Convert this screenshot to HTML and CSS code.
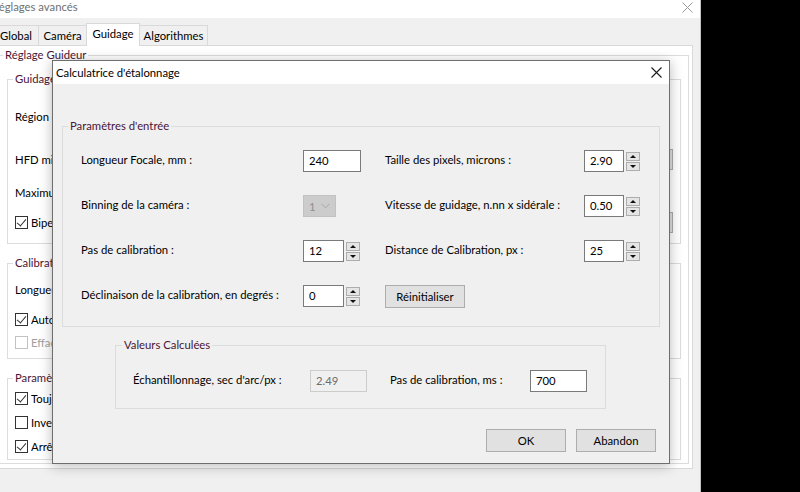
FILE: index.html
```html
<!DOCTYPE html>
<html lang="fr">
<head>
<meta charset="utf-8">
<title>Calculatrice d'étalonnage</title>
<link rel="stylesheet" href="styles.css">
</head>
<body>
<div class="screen">
  <div class="bgwin">
    <div class="bg-title">
      <span class="bg-title-text">Réglages avancés</span>
      <svg class="bg-close" width="11" height="11" viewBox="0 0 11 11"><path d="M0.5 0.5L10.5 10.5M10.5 0.5L0.5 10.5" stroke="#9a9a9a" stroke-width="1" fill="none"/></svg>
    </div>
    <div class="tabs">
      <div class="tab t-global">Global</div>
      <div class="tab t-camera">Caméra</div>
      <div class="tab t-guid sel">Guidage</div>
      <div class="tab t-algo">Algorithmes</div>
    </div>
    <div class="panel">
      <fieldset class="grp outer">
        <legend>Réglage Guideur</legend>
        <fieldset class="grp g-guid">
          <legend><span class="clip clip-l">Guidage</span></legend>
          <div class="brow m18"><span class="clip clip-l">Région de recherche (pixels) :</span></div>
          <div class="brow m21"><span class="clip clip-l">HFD minimum (pixels) :</span><span class="bbtn"></span></div>
          <div class="brow m11"><span class="clip clip-l">Maximum de pixels de l'étoile :</span></div>
          <div class="brow m8"><span class="cb on"></span><span class="clip clip-c">Bipeur lors de la perte d'étoile</span><span class="bbtn"></span></div>
        </fieldset>
        <fieldset class="grp g-cal">
          <legend><span class="clip clip-l">Calibration</span></legend>
          <div class="brow m7"><span class="clip clip-l">Longueur focale du guideur (mm) :</span></div>
          <div class="brow m8"><span class="cb on"></span><span class="clip clip-c">Autoriser la calibration automatique</span></div>
          <div class="brow m1 dis"><span class="cb off dis"></span><span class="clip clip-c">Effacer la calibration</span></div>
        </fieldset>
        <fieldset class="grp g-par">
          <legend><span class="clip clip-l">Paramètres</span></legend>
          <div class="brow h24"><span class="cb on"></span><span class="clip clip-c">Toujours recalibrer</span></div>
          <div class="brow h24"><span class="cb off"></span><span class="clip clip-c">Inverser la déclinaison</span></div>
          <div class="brow h24"><span class="cb on"></span><span class="clip clip-c">Arrêter le guidage</span></div>
        </fieldset>
      </fieldset>
    </div>
  </div>

  <div class="dialog">
    <div class="dlg-title">
      <span>Calculatrice d'étalonnage</span>
      <svg class="dlg-close" width="11" height="11" viewBox="0 0 11 11"><path d="M0.5 0.5L10.5 10.5M10.5 0.5L0.5 10.5" stroke="#1a1a1a" stroke-width="1.1" fill="none"/></svg>
    </div>
    <div class="dlg-body">
      <fieldset class="dgrp g-in">
        <legend>Paramètres d'entrée</legend>
        <div class="in-grid">
          <div class="lbl">Longueur Focale, mm :</div>
          <div class="fld"><span class="inp w58">240</span></div>
          <div class="lbl">Taille des pixels, microns :</div>
          <div class="fld"><span class="inp w40">2.90</span><span class="spin"><span class="sb"><i class="up"></i></span><span class="sb"><i class="dn"></i></span></span></div>

          <div class="lbl">Binning de la caméra :</div>
          <div class="fld"><span class="combo"><span>1</span><svg width="9" height="6" viewBox="0 0 9 6"><path d="M0.5 0.8L4.5 4.8L8.5 0.8" stroke="#a8a8a8" stroke-width="1" fill="none"/></svg></span></div>
          <div class="lbl">Vitesse de guidage, n.nn x sidérale :</div>
          <div class="fld"><span class="inp w40">0.50</span><span class="spin"><span class="sb"><i class="up"></i></span><span class="sb"><i class="dn"></i></span></span></div>

          <div class="lbl">Pas de calibration :</div>
          <div class="fld"><span class="inp w41">12</span><span class="spin"><span class="sb"><i class="up"></i></span><span class="sb"><i class="dn"></i></span></span></div>
          <div class="lbl">Distance de Calibration, px :</div>
          <div class="fld"><span class="inp w40">25</span><span class="spin"><span class="sb"><i class="up"></i></span><span class="sb"><i class="dn"></i></span></span></div>

          <div class="lbl">Déclinaison de la calibration, en degrés :</div>
          <div class="fld"><span class="inp w41">0</span><span class="spin"><span class="sb"><i class="up"></i></span><span class="sb"><i class="dn"></i></span></span></div>
          <div class="fld"><span class="btn">Réinitialiser</span></div>
          <div></div>
        </div>
      </fieldset>

      <fieldset class="dgrp g-out">
        <legend>Valeurs Calculées</legend>
        <div class="out-grid">
          <div class="lbl">Échantillonnage, sec d'arc/px :</div>
          <div class="fld"><span class="inp w57 disabled">2.49</span></div>
          <div class="lbl">Pas de calibration, ms :</div>
          <div class="fld"><span class="inp w57">700</span></div>
        </div>
      </fieldset>

      <div class="actions">
        <span class="btn">OK</span>
        <span class="btn">Abandon</span>
      </div>
    </div>
  </div>
</div>
</body>
</html>
```

FILE: styles.css
```css
* { box-sizing: border-box; }

html, body {
  margin: 0;
  padding: 0;
  width: 800px;
  height: 492px;
  overflow: hidden;
  background: #000;
}

body {
  font-family: Lato, "Noto Sans", sans-serif;
  font-size: 11.3px;
  color: #000;
}

.screen {
  position: relative;
  width: 800px;
  height: 492px;
  overflow: hidden;
  background: #000;
}

/* ---------- background window ---------- */
.bgwin {
  width: 701px;
  height: 492px;
  background: #f0f0f0;
  border-right: 1px solid #c4c4c4;
  overflow: hidden;
}

.bg-title {
  height: 18px;
  background: #fff;
  display: flex;
  align-items: center;
  justify-content: space-between;
  padding-right: 7px;
}

.bg-title-text {
  margin-left: -8px;
  color: #6f6f6f;
  line-height: 16px;
  position: relative;
  top: -2px;
}

.bg-close { position: relative; top: -2px; }

.tabs {
  height: 27px;
  display: flex;
  align-items: flex-end;
  margin-left: -7px;
}

.tab {
  height: 20px;
  line-height: 19px;
  text-align: center;
  background: #f0f0f0;
  border: 1px solid #d9d9d9;
  border-bottom: none;
  margin-right: -1px;
  white-space: nowrap;
}

.t-global { width: 46px; }
.t-camera { width: 49px; }
.t-guid { width: 54px; }
.t-algo { width: 69px; }

.tab.sel {
  height: 23px;
  line-height: 20px;
  background: #fff;
  margin-bottom: -1px;
  position: relative;
  z-index: 1;
}

.panel {
  margin-left: -4px;
  width: 697px;
  height: 424px;
  background: #fff;
  border: 1px solid #d9d9d9;
  padding-top: 1px;
}

.grp {
  margin: 0;
  border: 1px solid #dcdcdc;
  padding: 0 7px;
  min-width: 0;
}

.grp > legend {
  padding: 0 2px;
  margin-left: -2px;
  line-height: 16px;
  color: #4a1535;
  white-space: nowrap;
}

.outer {
  margin-left: 2px;
  width: 690px;
  padding-bottom: 3px;
}

.outer > legend { margin-left: -4px; }

.g-guid { margin-top: 8px; padding-bottom: 10px; }
.g-cal { margin-top: 11px; padding-bottom: 5px; }
.g-par { margin-top: 11px; padding-bottom: 1px; }

.brow {
  height: 22px;
  display: flex;
  align-items: center;
  white-space: nowrap;
}

.clip {
  display: block;
  overflow: hidden;
  white-space: nowrap;
  flex: none;
}

.clip-l { width: 37px; }
.clip-c { width: 21px; }

.brow.dis { color: #a0a0a0; }
.h24 { height: 24px; }
.m1 { margin-top: 1px; }
.m7 { margin-top: 7px; }
.m8 { margin-top: 8px; }
.m11 { margin-top: 11px; }
.m18 { margin-top: 18px; }
.m21 { margin-top: 21px; }

.bbtn {
  margin-left: auto;
  width: 60px;
  height: 21px;
  background: #e1e1e1;
  border: 1px solid #adadad;
}

.cb {
  width: 13px;
  height: 13px;
  border: 1px solid #333;
  background: #fff;
  margin-right: 3px;
  flex: none;
  position: relative;
}

.cb.dis { border-color: #c2c2c2; }

.cb.on::after {
  content: "";
  position: absolute;
  left: 3px;
  top: 0px;
  width: 4px;
  height: 8px;
  border-right: 1.3px solid #333;
  border-bottom: 1.3px solid #333;
  transform: rotate(40deg);
}

/* ---------- dialog ---------- */
.dialog {
  position: absolute;
  left: 52px;
  top: 60px;
  width: 618px;
  height: 404px;
  background: #f0f0f0;
  border: 1px solid #6e6e6e;
  box-shadow: 0 2px 12px rgba(0, 0, 0, 0.28);
  display: flex;
  flex-direction: column;
}

.dlg-title {
  height: 23px;
  background: #fff;
  display: flex;
  align-items: center;
  justify-content: space-between;
  padding-left: 3px;
  padding-right: 7px;
  line-height: 16px;
  flex: none;
}

.dlg-body {
  flex: 1;
  padding: 0 12px 10px 9px;
  display: flex;
  flex-direction: column;
}

.dgrp {
  margin: 0;
  border: 1px solid #dcdcdc;
  min-width: 0;
}

.dgrp > legend {
  padding: 0 2px;
  line-height: 16px;
  color: #4a1535;
  white-space: nowrap;
}

.g-in {
  margin-top: 34px;
  width: 598px;
  padding: 16px 0 19px 18px;
}

.g-in > legend { margin-left: -13px; }

.in-grid {
  display: grid;
  grid-template-columns: 222px 82px 199px auto;
  grid-auto-rows: 22px;
  row-gap: 23px;
}

.g-out {
  margin-top: 10px;
  margin-left: 53px;
  width: 491px;
  padding: 17px 0 16px 17px;
}

.g-out > legend { margin-left: -11px; }

.out-grid {
  display: grid;
  grid-template-columns: 177px 80px 140px auto;
  grid-auto-rows: 22px;
}

.lbl {
  line-height: 20px;
  white-space: nowrap;
}

.fld {
  display: flex;
  align-items: center;
  gap: 2px;
}

.inp {
  height: 22px;
  line-height: 20px;
  background: #fff;
  border: 1px solid #7a7a7a;
  padding: 0 5px;
  white-space: nowrap;
}

.inp.disabled {
  background: #f0f0f0;
  border-color: #cccccc;
  color: #6d6d6d;
}

.w40 { width: 40px; }
.w41 { width: 41px; }
.w57 { width: 57px; }
.w58 { width: 58px; }

.spin {
  display: flex;
  flex-direction: column;
  gap: 1px;
}

.sb {
  width: 14px;
  height: 9px;
  background: #e5e5e5;
  border: 1px solid #adadad;
  display: flex;
  align-items: center;
  justify-content: center;
}

.sb i {
  width: 0;
  height: 0;
  border-left: 3px solid transparent;
  border-right: 3px solid transparent;
}

.sb i.up { border-bottom: 3px solid #111; }
.sb i.dn { border-top: 3px solid #111; }

.combo {
  width: 33px;
  height: 22px;
  background: #cccccc;
  border: 1px solid #c2c2c2;
  color: #8f8f8f;
  display: flex;
  align-items: center;
  justify-content: space-between;
  padding: 0 5px 0 5px;
}

.btn {
  width: 80px;
  height: 23px;
  line-height: 21px;
  text-align: center;
  background: #e1e1e1;
  border: 1px solid #adadad;
  white-space: nowrap;
}

.actions {
  margin-top: 20px;
  display: flex;
  justify-content: flex-end;
  gap: 10px;
  padding-right: 1px;
}
```
